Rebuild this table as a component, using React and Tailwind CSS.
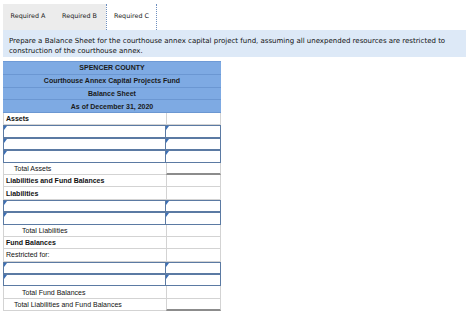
import React from 'react';

const headers = [
	'SPENCER COUNTY',
	'Courthouse Annex Capital Projects Fund',
	'Balance Sheet',
	'As of December 31, 2020',
];

// kind: label (bold), text (plain), input, total
const rows = [
	{ kind: 'label', text: 'Assets' },
	{ kind: 'input' },
	{ kind: 'input' },
	{ kind: 'input' },
	{ kind: 'total', text: 'Total Assets', indent: 'pl-[10px]' },
	{ kind: 'label', text: 'Liabilities and Fund Balances' },
	{ kind: 'label', text: 'Liabilities' },
	{ kind: 'input' },
	{ kind: 'input' },
	{ kind: 'total', text: 'Total Liabilities', indent: 'pl-[18px]', thin: true },
	{ kind: 'label', text: 'Fund Balances' },
	{ kind: 'text', text: 'Restricted for:' },
	{ kind: 'input' },
	{ kind: 'input' },
	{ kind: 'total', text: 'Total Fund Balances', indent: 'pl-[18px]', thin: true },
	{ kind: 'total', text: 'Total Liabilities and Fund Balances', indent: 'pl-[10px]' },
];

function Marker() {
	return (
		<span className="absolute left-0 top-0 w-0 h-0 border-t-[4px] border-r-[3px] border-t-[#3b6fb6] border-r-transparent" />
	);
}

function Row({ row }) {
	if (row.kind === 'input') {
		return (
			<div className="flex h-[12.4px]">
				<div className="relative w-[163px] border border-[#5b7aa3] bg-white">
					<Marker />
				</div>
				<div className="relative w-[55px] border border-l-0 border-[#5b7aa3] bg-white">
					<Marker />
				</div>
			</div>
		);
	}
	const bold = row.kind === 'label';
	return (
		<div className="flex h-[12.4px]">
			<div
				className={`w-[163px] border-b border-l border-[#d3d3d3] flex items-center leading-none text-[7px] text-[#111] ${
					bold ? 'font-bold pl-[2px]' : row.kind === 'text' ? 'pl-[2px]' : row.indent
				}`}>
				{row.text}
			</div>
			<div
				className={`w-[55px] border-l border-r border-[#d3d3d3] ${
					row.kind === 'total' && !row.thin ? 'border-b-2 border-b-[#8c8c8c]' : 'border-b'
				}`}
			/>
		</div>
	);
}

export default function App() {
	return (
		<div className="w-[474px] h-[315px] bg-white overflow-hidden" style={{ fontFamily: '"Liberation Sans", Arial, sans-serif' }}>
			<div className="flex pl-[3px] pt-[4px] h-[30px] text-[6.4px] text-[#222]" style={{ fontFamily: '"DejaVu Sans", Verdana, sans-serif' }}>
				<div className="w-[50px] bg-[#ececec] flex items-center justify-center">Required A</div>
				<div className="w-[53px] bg-[#ececec] flex items-center justify-center">Required B</div>
				<div className="w-[51px] bg-white border-l border-r border-dotted border-[#6f8fbf] flex items-center justify-center">Required C</div>
			</div>
			<div
				className="mx-[3px] w-[463px] h-[27px] bg-[#dde9f7] px-[6px] pt-[6px] text-[7px] leading-[10px] text-[#111]"
				style={{ fontFamily: '"DejaVu Sans", Verdana, sans-serif' }}>
				Prepare a Balance Sheet for the courthouse annex capital project fund, assuming all unexpended resources are restricted to construction of the courthouse annex.
			</div>
			<div className="ml-[3px] mt-[4px] w-[218px]">
				<div className="bg-[#7eaae3] border-t border-[#6e9ad6]">
					{headers.map((h) => (
						<div
							key={h}
							className="h-[12.75px] border-b border-[#6b97d2] flex items-center justify-center text-[7px] font-bold text-[#1a1a1a] leading-none">
							{h}
						</div>
					))}
				</div>
				{rows.map((r, i) => (
					<Row key={i} row={r} />
				))}
			</div>
		</div>
	);
}
